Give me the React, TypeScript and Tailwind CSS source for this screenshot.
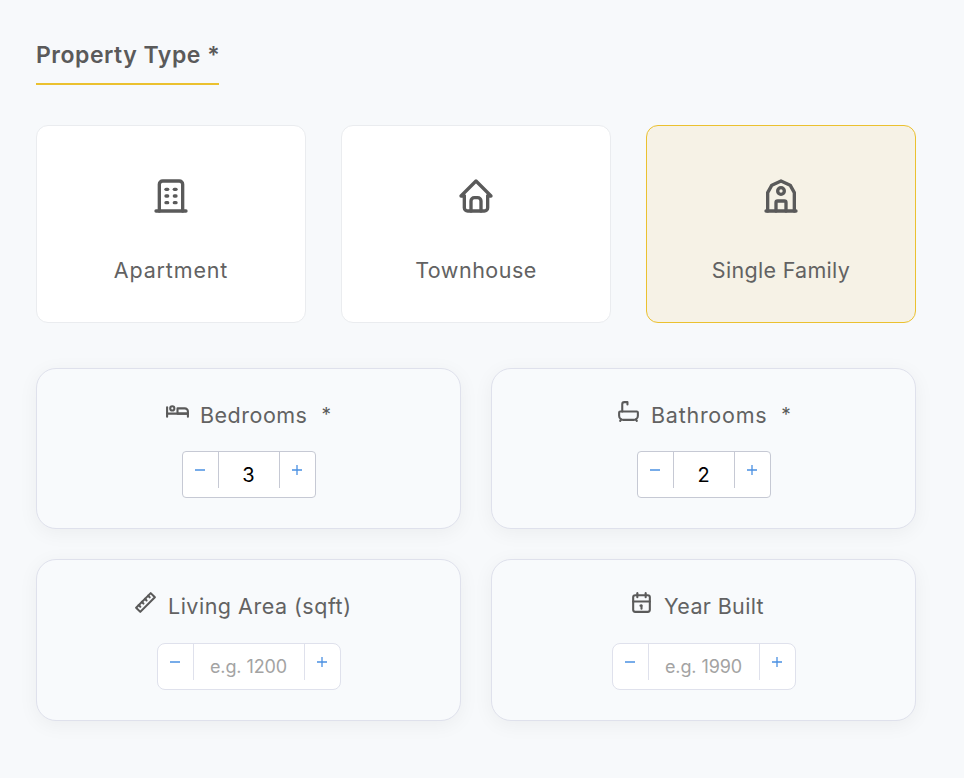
import React, { useState } from 'react';
import type { IconType } from 'react-icons';
import { TbBath, TbBed, TbBuilding, TbBuildingCottage, TbCalendar, TbHome, TbRuler2 } from 'react-icons/tb';

type PropertyType = 'apartment' | 'townhouse' | 'single';

const propertyTypes: { id: PropertyType; label: string; icon: IconType; text: string }[] = [
  { id: 'apartment', label: 'Apartment', icon: TbBuilding, text: 'tracking-[0.85px]' },
  { id: 'townhouse', label: 'Townhouse', icon: TbHome, text: 'tracking-[0.5px]' },
  { id: 'single', label: 'Single Family', icon: TbBuildingCottage, text: 'tracking-[0.3px]' },
];

const Stepper: React.FC<{ value: string; onChange: (v: string) => void; placeholder?: string }> = ({ value, onChange, placeholder }) => {
  const step = (by: number) => onChange(String(Math.max(0, Number(value || 0) + by)));
  const wide = Boolean(placeholder);
  const line = wide ? 'border-[#dfe1ec]' : 'border-[#c6c9d4]';

  return (
    <div className={`mx-auto flex h-[47px] overflow-hidden border bg-white ${line} ${wide ? 'w-[184px] rounded-lg' : 'w-[134px] rounded-[4px]'}`}>
      <button onClick={() => step(-1)} aria-label="Decrease" className={`flex h-9 w-9 shrink-0 items-center justify-center border-r pr-px text-[#4a90e2] ${line}`}>
        <svg className="h-2.5 w-2.5" viewBox="0 0 10 10" fill="none" stroke="currentColor" strokeWidth="1.3">
          <path d="M0 5h10" />
        </svg>
      </button>
      <input
        value={value}
        placeholder={placeholder}
        onChange={(e) => onChange(e.target.value)}
        className={`min-w-0 flex-1 bg-transparent text-center text-black outline-none placeholder:text-[#a3a3a3] ${wide ? 'h-[45px] text-[18px] tracking-[-0.1px]' : 'h-[46px] text-[20px]'}`}
      />
      <button onClick={() => step(1)} aria-label="Increase" className={`flex h-9 w-9 shrink-0 items-center justify-center border-l pr-px text-[#4a90e2] ${line}`}>
        <svg className="h-2.5 w-2.5" viewBox="0 0 10 10" fill="none" stroke="currentColor" strokeWidth="1.3">
          <path d="M0 5h10M5 0v10" />
        </svg>
      </button>
    </div>
  );
};

const DetailCard: React.FC<{ icon: IconType; label: string; required?: boolean; pad: string; text: string; children: React.ReactNode }> = ({ icon: Icon, label, required, pad, text, children }) => (
  <div className="flex flex-col rounded-[20px] border border-[#dfe1ec] bg-[#f8fafc] pt-[30px] shadow-[0_4px_20px_rgba(0,0,0,0.05)]">
    <div className={`flex h-8 whitespace-nowrap text-[#5a5a5a] ${pad}`}>
      <Icon className="h-[25px] w-[25px] shrink-0" />
      <span className={`ml-[10px] text-[21.5px] leading-8 text-[#626262] ${text}`}>{label}</span>
      {required && <span className="ml-[14px] text-[19px] leading-8">*</span>}
    </div>
    <div className={required ? 'mt-5' : 'mt-[21px]'}>{children}</div>
  </div>
);

export default function App() {
  const [selected, setSelected] = useState<PropertyType>('single');
  const [bedrooms, setBedrooms] = useState('3');
  const [bathrooms, setBathrooms] = useState('2');
  const [area, setArea] = useState('');
  const [year, setYear] = useState('');

  return (
    <div className="h-[778px] bg-[#f7f9fb] pl-9 pr-12 pt-9 font-['Inter',sans-serif] text-[#5a5a5a]">
      <h2 className="h-[49px] w-[183px] whitespace-nowrap border-b-2 border-[#ebc12f] text-[23px] font-semibold leading-[38px] tracking-[0.52px]">Property Type *</h2>

      <div className="mt-10 grid grid-cols-3 gap-[35px]">
        {propertyTypes.map(({ id, label, icon: Icon, text }) => (
          <button
            key={id}
            onClick={() => setSelected(id)}
            className={`flex h-[198px] flex-col items-center rounded-xl border pt-[50px] ${selected === id ? 'border-[#ebc12f] bg-[#f6f2e6]' : 'border-[#eaecef] bg-white'}`}
          >
            <Icon className="h-10 w-10" />
            <span className={`mt-[38px] whitespace-nowrap text-[21.5px] leading-8 text-[#626262] ${text}`}>{label}</span>
          </button>
        ))}
      </div>

      <div className="mt-[45px] grid grid-cols-2 grid-rows-[161px_162px] gap-[30px]">
        <DetailCard icon={TbBed} label="Bedrooms" required pad="pl-[128px]" text="tracking-[0.5px]">
          <Stepper value={bedrooms} onChange={setBedrooms} />
        </DetailCard>
        <DetailCard icon={TbBath} label="Bathrooms" required pad="pl-[124px]" text="tracking-[0.75px]">
          <Stepper value={bathrooms} onChange={setBathrooms} />
        </DetailCard>
        <DetailCard icon={TbRuler2} label="Living Area (sqft)" pad="pl-[96px]" text="tracking-[0.5px]">
          <Stepper value={area} onChange={setArea} placeholder="e.g. 1200" />
        </DetailCard>
        <DetailCard icon={TbCalendar} label="Year Built" pad="pl-[137px]" text="tracking-[0.35px]">
          <Stepper value={year} onChange={setYear} placeholder="e.g. 1990" />
        </DetailCard>
      </div>
    </div>
  );
}
